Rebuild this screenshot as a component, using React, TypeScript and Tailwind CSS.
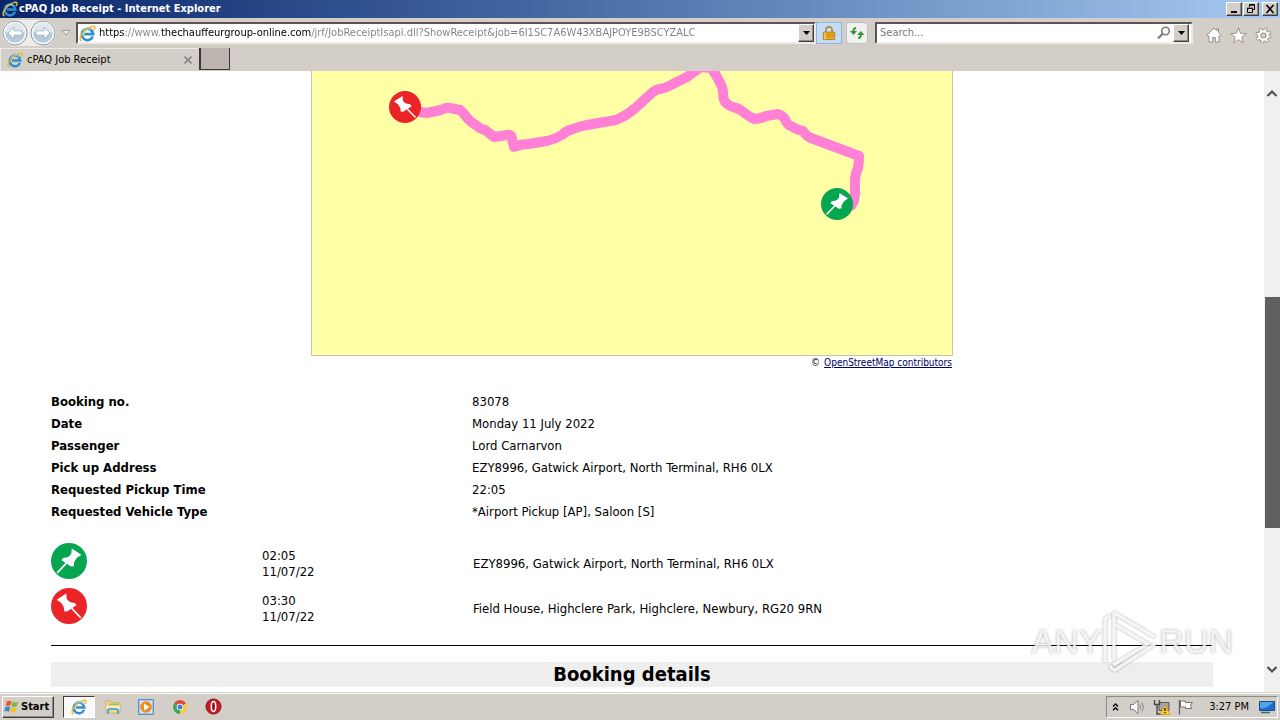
import type { ReactNode } from "react";

const bookingRows: [string, string][] = [
  ["Booking no.", "83078"],
  ["Date", "Monday 11 July 2022"],
  ["Passenger", "Lord Carnarvon"],
  ["Pick up Address", "EZY8996, Gatwick Airport, North Terminal, RH6 0LX"],
  ["Requested Pickup Time", "22:05"],
  ["Requested Vehicle Type", "*Airport Pickup [AP], Saloon [S]"],
];

const stops = [
  { kind: "start" as const, time: "02:05", date: "11/07/22", place: "EZY8996, Gatwick Airport, North Terminal, RH6 0LX" },
  { kind: "end" as const, time: "03:30", date: "11/07/22", place: "Field House, Highclere Park, Highclere, Newbury, RG20 9RN" },
];

function IeLogo({ className }: { className: string }) {
  return (
    <svg viewBox="0 0 18 18" className={className} aria-hidden="true">
      <path d="M14.6 12.2A6 6 0 1 1 15 9.6H5.5" fill="none" stroke="#2f8fd0" strokeWidth="2.8" />
      <path d="M4.2 6.4A6 6 0 0 1 13 5.2" fill="none" stroke="#7cc8f2" strokeWidth="1.2" />
      <path d="M2.4 16.6C-.6 15 2.6 8.4 8.6 4.2 12.4 1.5 16.2.6 16.8 2.2c.3.8-.1 1.8-.7 2.8" fill="none" stroke="#e9b92d" strokeWidth="1.6" strokeLinecap="round" />
    </svg>
  );
}

function PinShape({ kind }: { kind: "start" | "end" }) {
  return (
    <g>
      <circle cx="18" cy="18" r="18" fill={kind === "start" ? "#06a650" : "#ea2427"} />
      <g transform={kind === "end" ? "translate(36 0) scale(-1 1)" : undefined}>
        <path d="M20.8 5.600L30.400 11.800 26 14.800Q22.600 18.400 22.800 23.200L20 23.400 10.600 17.200Q11 15 13.400 14.700 17.600 14.800 20.200 11Z" fill="#fff" />
        <path d="M15.400 20.200L6.200 29.800" stroke="#fff" strokeWidth="1.700" />
      </g>
    </g>
  );
}

function Arrow() {
  return (
    <svg viewBox="0 0 7 4" className="h-1 w-[7px]" aria-hidden="true">
      <path d="M0 0h7L3.500 4z" fill="#000" />
    </svg>
  );
}

function BevelButton({ label, className, children }: { label: string; className: string; children: ReactNode }) {
  return (
    <button
      type="button"
      aria-label={label}
      className={`flex shrink-0 items-center justify-center border border-t-white border-l-white border-r-[#404040] border-b-[#404040] bg-[#d4cec8] shadow-[inset_-1px_-1px_0_#908a86] ${className}`}
    >
      {children}
    </button>
  );
}

function NavArrow({ label, flip }: { label: string; flip?: boolean }) {
  return (
    <button type="button" aria-label={label} className="size-[26px] shrink-0">
      <svg viewBox="0 0 26 26" className="size-full" aria-hidden="true">
        <circle cx="13" cy="13" r="12" fill="#d7e1ea" stroke="#8d979f" />
        <circle cx="13" cy="13" r="10.500" fill="#b5cadb" stroke="#f6fafc" strokeWidth="1.5" />
        <path d="M3.500 12a9.500 9.500 0 0 1 19 0q-9.500 3-19 0z" fill="#dfe8ef" />
        <path
          d="M6 13l6-6v3.800h8v4.400h-8V19z"
          fill="#fff"
          stroke="#8ea6b8"
          strokeWidth=".7"
          transform={flip ? "translate(26 0) scale(-1 1)" : undefined}
        />
      </svg>
    </button>
  );
}

function TitleBar() {
  return (
    <header className="flex h-[18px] shrink-0 items-center gap-px bg-linear-to-r from-[#0a246a] to-[#a6caf0] pr-0.5 pl-0.5">
      <IeLogo className="size-4" />
      <h1 className="flex-1 text-[11px] leading-4 font-bold text-white">cPAQ Job Receipt - Internet Explorer</h1>
      <BevelButton label="Minimize" className="h-3.5 w-4">
        <svg viewBox="0 0 12 10" className="h-2.5 w-3" aria-hidden="true"><path d="M3 7h6v2H3z" /></svg>
      </BevelButton>
      <BevelButton label="Restore" className="h-3.5 w-4">
        <svg viewBox="0 0 12 10" className="h-2.5 w-3" aria-hidden="true">
          <path d="M4.500 3V.5h5v5H8M4 1.200h6M2.500 4.500h5v4h-5zM2 4.200h6" fill="none" stroke="#000" />
        </svg>
      </BevelButton>
      <BevelButton label="Close" className="ml-0.5 h-3.5 w-4">
        <svg viewBox="0 0 12 10" className="h-2.5 w-3" aria-hidden="true"><path d="M2.500 1l7 8M9.500 1l-7 8" stroke="#000" strokeWidth="1.600" /></svg>
      </BevelButton>
    </header>
  );
}

function Toolbar() {
  return (
    <nav className="flex h-[30px] shrink-0 items-center pr-2 pl-0.5">
      <div className="flex shrink-0 gap-0.5 rounded-full bg-[#eeebe8]">
        <NavArrow label="Back" />
        <NavArrow label="Forward" flip />
      </div>
      <button type="button" aria-label="Recent pages" className="mx-[5px] shrink-0">
        <svg viewBox="0 0 10 6" className="h-1.5 w-2.5" aria-hidden="true"><path d="M1 .5h8L5 5z" fill="#eee9e5" stroke="#a49e9a" /></svg>
      </button>
      <div className="flex h-[22px] flex-1 items-center border-2 border-t-[#5a5552] border-l-[#5a5552] border-r-[#eeeae6] border-b-[#eeeae6] bg-white pl-px">
        <IeLogo className="size-[17px] shrink-0" />
        <input
          type="text"
          aria-label="Address"
          readOnly
          value="https://www.thechauffeurgroup-online.com/jrf/JobReceiptIsapi.dll?ShowReceipt&job=6I1SC7A6W43XBAJPOYE9BSCYZALC"
          className="ml-[3px] min-w-0 flex-1 bg-[linear-gradient(90deg,#000_26px,#808080_26px,#808080_62px,#000_62px,#000_212px,#808080_212px)] bg-clip-text text-[11px] leading-4 text-transparent outline-none"
        />
        <BevelButton label="Show address history" className="h-[18px] w-4"><Arrow /></BevelButton>
      </div>
      <button type="button" aria-label="Security report" className="flex h-[22px] w-[26px] shrink-0 items-center justify-center border border-[#8cb4e0] bg-[#c5dcf7]">
        <svg viewBox="0 0 16 18" className="h-4 w-3.5" aria-hidden="true">
          <path d="M4.500 9V5.500a3.500 3.500 0 0 1 7 0V9" fill="none" stroke="#a98a45" strokeWidth="1.800" />
          <path d="M1.500 8h13v8.500h-13z" fill="#e9a91c" stroke="#b47d17" />
          <path d="M2 10.500h12M2 13h12" stroke="#c98a17" />
          <path d="M3.500 8.500v7.500" stroke="#fbd873" strokeWidth="1.500" />
        </svg>
      </button>
      <button type="button" aria-label="Refresh" className="mr-[7px] ml-1 flex h-[22px] w-[22px] shrink-0 items-center justify-center rounded-sm border border-[#c0c4c0] bg-[#f0f1f0]">
        <svg viewBox="0 0 16 14" className="h-3.5 w-4" aria-hidden="true">
          <path d="M4.500 6V4.500q0-2 2.500-2.500" fill="none" stroke="#34933b" strokeWidth="2" />
          <path d="M1 5h7L4.500 9z" fill="#34933b" />
          <path d="M11.800 8v1.500q0 2-2.500 2.800" fill="none" stroke="#34933b" strokeWidth="2" />
          <path d="M8.200 9h7.300L11.800 5z" fill="#34933b" />
        </svg>
      </button>
      <form className="flex h-[22px] w-[318px] shrink-0 items-center border-2 border-t-[#5a5552] border-l-[#5a5552] border-r-[#eeeae6] border-b-[#eeeae6] bg-white pr-0.5 pl-[3px]">
        <input type="text" aria-label="Search" placeholder="Search..." className="min-w-0 flex-1 bg-transparent text-[11px] leading-4 outline-none placeholder:text-[#7b7b7b]" />
        <button type="button" aria-label="Run search" className="shrink-0">
          <svg viewBox="0 0 14 14" className="size-3.5" aria-hidden="true">
            <circle cx="8.500" cy="5" r="3.800" fill="none" stroke="#7b7b7b" strokeWidth="1.600" />
            <path d="M5.700 7.800L1 12.500" stroke="#7b7b7b" strokeWidth="2.200" />
          </svg>
        </button>
        <BevelButton label="Search providers" className="ml-0.5 h-[18px] w-4"><Arrow /></BevelButton>
      </form>
      <div className="ml-[13px] flex shrink-0 items-center gap-2 pt-1">
        <button type="button" aria-label="Home">
          <svg viewBox="0 0 16 16" className="size-4" aria-hidden="true">
            <path d="M8 1L.8 8.200l1.400 1.200.8-.7V15h3.700v-4.500h2.600V15H13V8.700l.8.700 1.400-1.200L12.500 5.500V2h-1.700v1.800z" fill="#fff" stroke="#8b8581" strokeWidth=".9" />
          </svg>
        </button>
        <button type="button" aria-label="Favorites">
          <svg viewBox="0 0 18 18" className="size-[17px]" aria-hidden="true">
            <path d="M9 1l2.200 5.600 5.900.4-4.600 3.800L14 16.600 9 13.400l-5 3.200 1.500-5.800L.9 7l5.900-.4z" fill="#fff" stroke="#8b8581" strokeWidth=".9" />
          </svg>
        </button>
        <button type="button" aria-label="Tools">
          <svg viewBox="0 0 18 18" className="size-[17px]" aria-hidden="true">
            <circle cx="9" cy="9" r="6.900" fill="none" stroke="#8b8581" strokeWidth="3.200" strokeDasharray="2.710 2.710" />
            <circle cx="9" cy="9" r="4.500" fill="none" stroke="#8b8581" strokeWidth="4.400" />
            <circle cx="9" cy="9" r="6.500" fill="none" stroke="#fff" strokeWidth="2.600" strokeDasharray="1.700 3.405" strokeDashoffset="-.4" />
            <circle cx="9" cy="9" r="4.500" fill="none" stroke="#fff" strokeWidth="2.600" />
          </svg>
        </button>
      </div>
    </nav>
  );
}

function TabStrip() {
  return (
    <div className="flex h-[23px] shrink-0 items-start gap-px">
      <div role="tablist" className="flex h-[23px] w-[198px] items-center border-t border-l border-[#eeeae6] pr-1.5 pl-1.5">
        <button type="button" role="tab" aria-selected="true" className="flex min-w-0 flex-1 items-center gap-1 text-left text-[11px] leading-4">
          <IeLogo className="size-4 shrink-0" />
          cPAQ Job Receipt
        </button>
        <button type="button" aria-label="Close tab">
          <svg viewBox="0 0 8 8" className="size-2" aria-hidden="true"><path d="M.5.5l7 7M7.500.5l-7 7" stroke="#8b8581" strokeWidth="1.600" /></svg>
        </button>
      </div>
      <button type="button" aria-label="New tab" className="h-[22px] w-[31px] border-r border-b border-l-2 border-[#3c3836] bg-[#bdb5b0]" />
    </div>
  );
}

function RouteMap() {
  return (
    <figure className="mx-auto w-[642px] max-w-full">
      <svg viewBox="0 0 642 285" className="block w-full" role="img" aria-label="Route map">
        <path d="M0 0h642v285H0z" fill="#ffffa5" />
        <path d="M.5 0v284.500h641V0" fill="none" stroke="#c4c4b4" />
        <path
          d="M94 36L105 39Q111 42 116 42L130 39Q135 36 139 37L149 39Q153 42 157 48 161 52 165 54 169 58 174 59 178 62 183 66L196 64Q201 63 201 68L203 76Q210 73 217 73L236 70Q244 68 251 64 256 59 262 58 269 55 276 54L305 49Q312 46 318 42 325 37 331 31 336 26 342 21 346 18 349 18 355 17 360 14L376 6 390-4 400-3Q404 2 407 8 411 14 412 20 412 30 415 32 418 35 422 36 427 37 431 40 437 45 443 48 449 48 455 45L467 43Q471 44 474 48 476 54 480 55 486 59 492 60 495 65 500 67L548 85Q548 92 547 97 544 103 544 110V120Q544 126 543 130L540 135"
          fill="none"
          stroke="#ff80d5"
          strokeWidth="10"
          strokeLinejoin="round"
          strokeLinecap="round"
        />
        <svg x="78" y="20" width="32" height="32" viewBox="0 0 36 36"><PinShape kind="end" /></svg>
        <svg x="510" y="117" width="32" height="32" viewBox="0 0 36 36"><PinShape kind="start" /></svg>
      </svg>
      <figcaption className="flex justify-end gap-1 pr-px text-[10px] leading-[14px]">
        ©
        <a href="#osm" className="text-[#000066] underline">OpenStreetMap contributors</a>
      </figcaption>
    </figure>
  );
}

function Receipt() {
  return (
    <main className="min-w-0 flex-1 overflow-hidden bg-white px-[51px] text-[13px]">
      <RouteMap />
      <table className="mt-[21px] w-full table-fixed text-left leading-4">
        <tbody>
          {bookingRows.map(([name, value]) => (
            <tr key={name} className="h-[22px]">
              <th scope="row" className="w-[421px] font-bold">{name}</th>
              <td>{value}</td>
            </tr>
          ))}
        </tbody>
      </table>
      <table className="mt-[15px] w-full table-fixed leading-4">
        <tbody>
          {stops.map((stop) => (
            <tr key={stop.kind} className="h-[45px]">
              <td className="w-[211px]">
                <svg viewBox="0 0 36 36" className="block size-9" role="img" aria-label={stop.kind === "start" ? "Pick up" : "Drop off"}>
                  <PinShape kind={stop.kind} />
                </svg>
              </td>
              <td className="w-[211px] pt-[6px]">
                {stop.time}
                <br />
                {stop.date}
              </td>
              <td className="pt-[6px]">{stop.place}</td>
            </tr>
          ))}
        </tbody>
      </table>
      <hr className="mt-[17px] border-black" />
      <h2 className="mt-4 bg-[#eee] text-center text-[20px] leading-[25px] font-bold">Booking details</h2>
    </main>
  );
}

function ScrollBar() {
  return (
    <div className="flex w-4 shrink-0 flex-col items-center bg-[#f0f0f0] pt-4 pb-4">
      <button type="button" aria-label="Scroll up" className="flex h-3 items-center">
        <svg viewBox="0 0 12 8" className="h-2 w-3" aria-hidden="true"><path d="M1.500 7L6 2.500 10.500 7" fill="none" stroke="#505050" strokeWidth="2.200" /></svg>
      </button>
      <div className="flex w-full flex-1 flex-col items-end pl-px">
        <div className="flex-[198]" />
        <div className="w-full flex-[231] bg-[#606060]" />
        <div className="flex-[136]" />
      </div>
      <button type="button" aria-label="Scroll down" className="flex h-3 items-center">
        <svg viewBox="0 0 12 8" className="h-2 w-3" aria-hidden="true"><path d="M1.500 1L6 5.500 10.500 1" fill="none" stroke="#505050" strokeWidth="2.200" /></svg>
      </button>
    </div>
  );
}

function Watermark() {
  return (
    <div className="pointer-events-none absolute right-[47px] bottom-[46px] flex h-[66px] items-center font-['Liberation_Sans',sans-serif] text-[34px] leading-[40px] text-white/80 [text-shadow:0_0_3px_#00000059]">
      <span>ANY</span>
      <svg viewBox="0 0 58 66" className="h-[66px] w-[58px] drop-shadow-[0_0_1px_#00000066]" aria-hidden="true">
        <path d="M10 8Q4 8 4 14V54M13 52V5L54 29M13 16L47 36 12 57M54 36L14 62Q9 61 10 57" fill="none" stroke="#fff" strokeOpacity=".85" strokeWidth="3.500" strokeLinejoin="round" />
      </svg>
      <span>RUN</span>
    </div>
  );
}

function TaskBar() {
  return (
    <footer className="flex h-7 shrink-0 items-center border-t border-[#d4cec8] pr-0.5 pl-0.5 shadow-[inset_0_1px_0_#fff]">
      <button type="button" className="flex h-[22px] w-[52px] items-center gap-0.5 border border-t-white border-r-[#404040] border-b-[#404040] border-l-white pl-px text-[11px] leading-4 font-bold shadow-[inset_-1px_-1px_0_#908a86]">
        <svg viewBox="0 0 16 16" className="size-[15px] shrink-0" aria-hidden="true">
          <path d="M3 2.500q2.500-1.500 5 0L6.800 7.500q-2.300-1.200-5 0z" fill="#e8582a" />
          <path d="M9 3q2.500 1.300 6 0l-1.500 5q-2.500 1-5.500 0z" fill="#7fb93c" />
          <path d="M1.500 8.500q2.500-1.200 5 0L5.300 13.500q-2.300-1.300-5 0z" fill="#3b84d0" />
          <path d="M7.700 9q2.600 1.200 5.500 0l-1.300 5q-2.700 1-5.500 0z" fill="#f5bf2a" />
        </svg>
        Start
      </button>
      <div className="ml-[9px] flex items-center">
        <button type="button" aria-label="Internet Explorer" className="mr-2.5 flex h-[22px] w-8 items-center justify-center border border-t-[#404040] border-r-white border-b-white border-l-[#404040] bg-[#faf9f8]">
          <IeLogo className="size-4" />
        </button>
        <button type="button" aria-label="File Explorer" className="mr-[17px]">
          <svg viewBox="0 0 16 16" className="size-4" aria-hidden="true">
            <path d="M1 2h5l1 1.500h8V14H1z" fill="#f0d98a" stroke="#c9a94d" strokeWidth=".7" />
            <path d="M4 4.500h10V6H4z" fill="#8cc16a" />
            <path d="M1 7h14v3H1z" fill="#f9ecb4" />
            <path d="M3 15v-3q0-2 2-2h6q2 0 2 2v3" fill="none" stroke="#5fa9d8" strokeWidth="2.200" />
          </svg>
        </button>
        <button type="button" aria-label="Media Player" className="mr-[18px]">
          <svg viewBox="0 0 16 16" className="size-4" aria-hidden="true">
            <path d="M.5.5h15v15H.5z" fill="#9cc4ec" stroke="#5b91c8" />
            <path d="M2 2h12v12H2z" fill="#d8e8f7" />
            <circle cx="8" cy="8" r="5.800" fill="#f08a1c" />
            <path d="M6 4.500v7L11.500 8z" fill="#fff" />
          </svg>
        </button>
        <button type="button" aria-label="Chrome" className="mr-[17px]">
          <svg viewBox="0 0 16 16" className="size-4" aria-hidden="true">
            <path d="M8 8L2 4.500A7 7 0 0 1 14 4.500z" fill="#df4c3c" />
            <path d="M8 8l6.100-3.500A7 7 0 0 1 8 15z" fill="#f8cb38" />
            <path d="M8 8v7A7 7 0 0 1 2 4.500z" fill="#3aa757" />
            <circle cx="8" cy="8" r="3.300" fill="#fff" />
            <circle cx="8" cy="8" r="2.500" fill="#3f7fe0" />
          </svg>
        </button>
        <button type="button" aria-label="Opera">
          <svg viewBox="0 0 18 18" className="size-[17px]" aria-hidden="true">
            <circle cx="9" cy="9" r="8" fill="#c81a22" stroke="#8c1016" />
            <ellipse cx="9" cy="9" rx="2.300" ry="5.200" fill="#8c1016" stroke="#fff" strokeWidth="1.600" />
          </svg>
        </button>
      </div>
      <div className="ml-auto flex h-[22px] items-center border border-t-[#908a86] border-r-white border-b-white border-l-[#908a86] pr-0.5 pl-[5px]">
        <button type="button" aria-label="Show hidden icons">
          <svg viewBox="0 0 7 8" className="h-2 w-[7px]" aria-hidden="true"><path d="M1 3.500L3.500 1 6 3.500M1 7.200l2.500-2.500L6 7.200" fill="none" stroke="#000" strokeWidth="1.300" /></svg>
        </button>
        <svg viewBox="0 0 18 16" className="ml-2.5 h-4 w-[18px]" role="img" aria-label="Volume">
          <path d="M1.500 5.500h3L9 1.500v13l-4.500-4h-3z" fill="#fff" stroke="#77716d" />
          <path d="M11 5.500q1.500 2.500 0 5M13 3.500q3 4.500 0 9" fill="none" stroke="#8a8480" />
        </svg>
        <svg viewBox="0 0 18 16" className="ml-1.5 h-4 w-[18px]" role="img" aria-label="Network warning">
          <path d="M6 3.500h10v8H6z" fill="#a9a5a2" stroke="#5b5754" />
          <path d="M1.500 1v4.500h5V1M4 5.500V15h7" fill="none" stroke="#4b4744" strokeWidth="1.400" />
          <path d="M12 6l5 9.500H7z" fill="#fbd02b" stroke="#c79310" strokeWidth=".7" />
          <path d="M12 9v3M12 13v1.200" stroke="#000" strokeWidth="1.200" />
        </svg>
        <svg viewBox="0 0 18 16" className="ml-1.5 h-4 w-[18px]" role="img" aria-label="Action Center">
          <path d="M3.500 2h5v1.500h7L13.500 6l1 3.500h-6V8h-5z" fill="#fff" stroke="#77716d" />
          <path d="M2.500 1v14.500" stroke="#66605c" strokeWidth="1.400" />
        </svg>
        <time className="ml-3.5 text-[11px] leading-4">3:27 PM</time>
        <button type="button" aria-label="Show desktop" className="ml-2.5">
          <svg viewBox="0 0 16 14" className="h-3.5 w-4" aria-hidden="true">
            <path d="M.5 1.500h15v9H.5z" fill="#1e6fcb" stroke="#204a82" />
            <path d="M1 2h14L8 7q-3 2-7 1z" fill="#4fa3ec" />
            <path d="M2 12.500h9" stroke="#44607f" strokeWidth="1.500" />
          </svg>
        </button>
      </div>
    </footer>
  );
}

export default function App() {
  return (
    <div className="relative flex h-screen flex-col overflow-hidden bg-[#d4cec8] font-['DejaVu_Sans_Condensed','DejaVu_Sans',sans-serif] text-black">
      <TitleBar />
      <Toolbar />
      <TabStrip />
      <div className="flex min-h-0 flex-1">
        <Receipt />
        <ScrollBar />
      </div>
      <TaskBar />
      <Watermark />
    </div>
  );
}
